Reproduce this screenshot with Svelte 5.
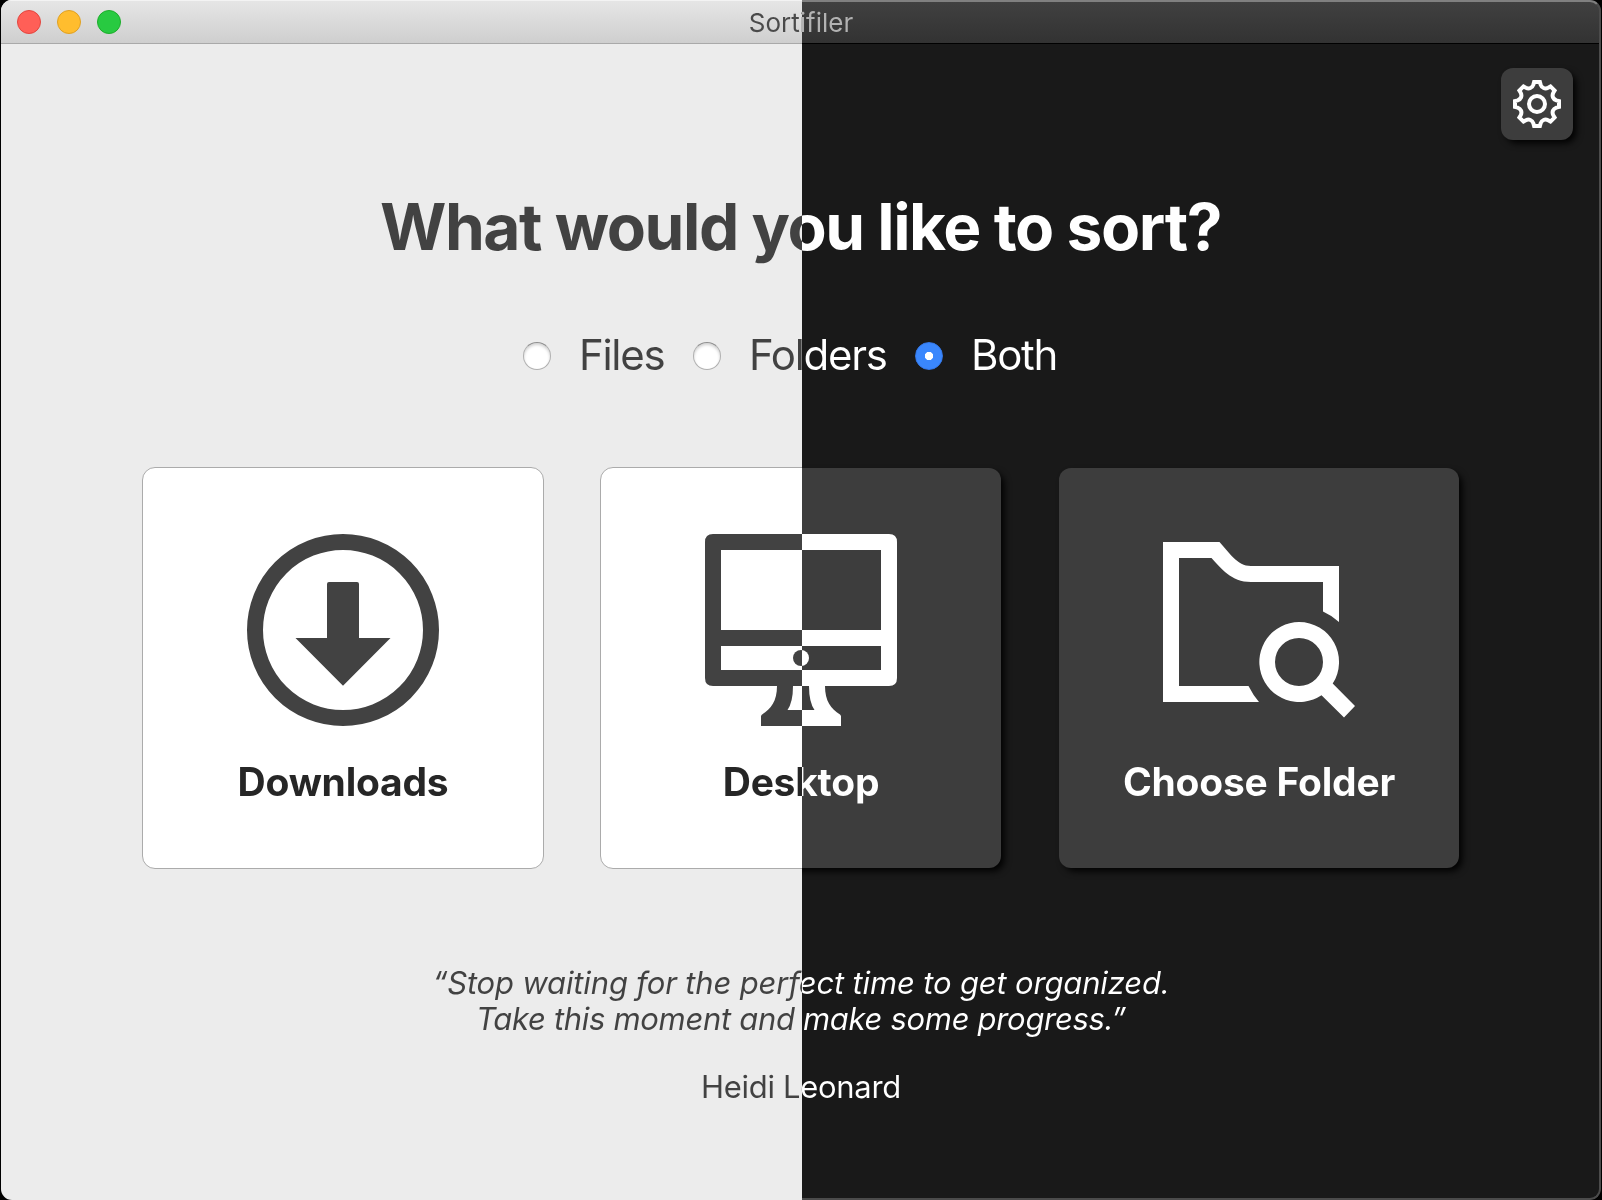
<script>
  let selected = $state('Both');

  const options = ['Files', 'Folders', 'Both'];
  const lights = ['red', 'yellow', 'green'];

  // Outline of an eight-toothed gear centred on the origin.
  function gearPath() {
    const rot = (x, y, deg) => {
      const a = (deg * Math.PI) / 180;
      const px = x * Math.cos(a) - y * Math.sin(a);
      const py = x * Math.sin(a) + y * Math.cos(a);
      return `${px.toFixed(2)} ${py.toFixed(2)}`;
    };
    let d = `M${rot(-2.9, -22, 0)}`;
    for (let k = 0; k < 8; k++) {
      const a = k * 45;
      d += `L${rot(2.9, -22, a)}L${rot(3.6, -19.4, a)}`;
      d += `C${rot(4.8, -16, a)} ${rot(-4.8, -16, a + 45)} ${rot(-3.6, -19.4, a + 45)}`;
      d += `L${rot(-2.9, -22, a + 45)}`;
    }
    return d + 'Z';
  }
</script>

<div class="window">
  <header class="titlebar">
    <div class="lights">
      {#each lights as light}
        <span class="light {light}"></span>
      {/each}
    </div>
    <span class="app-name">Sortifiler</span>
  </header>

  <main>
    <button class="settings" aria-label="Settings">
      <svg viewBox="-24 -24 48 48" width="48" height="48" fill="none" stroke="#fff" stroke-width="4">
        <path d={gearPath()} />
        <circle r="8" />
      </svg>
    </button>

    <h1>What would you like to sort?</h1>

    <div class="options">
      {#each options as option}
        <label class="option">
          <input type="radio" name="kind" value={option} bind:group={selected} />
          <span class="option-text">{option}</span>
        </label>
      {/each}
    </div>

    <div class="cards">
      <button class="card light-card">
        <svg viewBox="0 0 192 192" width="192" height="192" fill="#424242">
          <circle cx="96" cy="96" r="88" fill="none" stroke="#424242" stroke-width="16" />
          <path d="M82 48H110Q112 48 112 50V104H143.500L96 151.700L48.500 104H80V50Q80 48 82 48Z" />
        </svg>
        <span class="card-label">Downloads</span>
      </button>

      <button class="card split-card">
        <svg viewBox="0 0 192 192" width="192" height="192">
          <defs>
            <linearGradient id="split" gradientUnits="userSpaceOnUse" x1="0" y1="0" x2="194" y2="0">
              <stop offset="0.5" stop-color="#424242" />
              <stop offset="0.5" stop-color="#fff" />
            </linearGradient>
          </defs>
          <path
            fill="url(#split)"
            fill-rule="evenodd"
            d="M8 0H184Q192 0 192 8V144Q192 152 184 152H120C120 167 126 175 135 180.500Q136 181.500 136 182.500V192H56V182.500Q56 181.500 57 180.500C66 175 72 167 72 152H8Q0 152 0 144V8Q0 0 8 0ZM16 16V96H176V16ZM16 112V136H176V112ZM88 152Q88 168 82.500 176H109.500Q104 168 104 152Z"
          />
          <circle cx="96" cy="124" r="8" fill="url(#split)" />
        </svg>
        <span class="card-label">Desktop</span>
      </button>

      <button class="card dark-card">
        <svg viewBox="0 0 192 192" width="192" height="192" fill="#fff">
          <path d="M0 8H56.500C66 18 74 32 88 32H176V88Q168 81 160 77.500V48H88C68 48 58 34 48.500 24H16V152H85.500Q90 161 96 168H0Z" />
          <path fill-rule="evenodd" d="M136 88A40 40 0 0 1 169.700 149.600L192 172L181 183.500L158.500 161.300A40 40 0 1 1 136 88ZM136 104A24 24 0 1 0 136 152A24 24 0 1 0 136 104Z" />
        </svg>
        <span class="card-label">Choose Folder</span>
      </button>
    </div>

    <blockquote>
      <span class="line first">“Stop waiting for the perfect time to get organized.</span>
      <span class="line second">Take this moment and make some progress.”</span>
    </blockquote>
    <p class="author">Heidi Leonard</p>
  </main>
</div>

<style>
  :global(body) {
    margin: 0;
    background: #000;
  }

  .window,
  .window * {
    box-sizing: border-box;
  }

  .window {
    --split: 802px;
    --drop: 4px 4px 7px -1px #000;
    position: relative;
    width: 1600px;
    height: 1200px;
    margin-left: 1px;
    border-radius: 11px;
    overflow: hidden;
    font-family: Inter, 'Liberation Sans', sans-serif;
    background: linear-gradient(to right, #ececec var(--split), #191919 var(--split)) fixed;
  }

  /* Thin highlight round the dark half of the window. */
  .window::after {
    content: '';
    position: absolute;
    inset: 0;
    border: 2px solid #4b4b4b;
    border-top-color: #808080;
    border-radius: 11px;
    clip-path: inset(0 0 0 801px);
    pointer-events: none;
  }

  .titlebar {
    position: relative;
    display: flex;
    align-items: center;
    height: 44px;
    padding: 0 16px;
    background:
      linear-gradient(#a9a9a9, #a9a9a9) 0 43px / 801px 1px no-repeat,
      linear-gradient(#000, #000) 801px 43px / 799px 1px no-repeat,
      linear-gradient(#f3f3f3, #f3f3f3) 0 0 / 801px 1px no-repeat,
      linear-gradient(#e6e6e6, #cecece) 0 0 / 801px 44px no-repeat,
      linear-gradient(#414141, #323232) 801px 0 / 799px 44px no-repeat;
  }

  .lights {
    display: flex;
    gap: 16px;
    width: 0;
  }

  .light {
    flex: none;
    width: 24px;
    height: 24px;
    border-radius: 50%;
    border: 1px solid;
  }

  .red {
    background: #ff5f57;
    border-color: #e2463f;
  }

  .yellow {
    background: #ffbd2e;
    border-color: #dfa023;
  }

  .green {
    background: #28ca41;
    border-color: #1dad2b;
  }

  .app-name,
  h1,
  .option-text,
  .card-label,
  .line,
  .author {
    color: transparent;
    background: linear-gradient(to right, #424242 var(--split), #fff var(--split)) fixed;
    background-clip: text;
    -webkit-background-clip: text;
    white-space: nowrap;
  }

  .app-name {
    flex: 1;
    text-align: center;
    font-size: 26px;
    background-image: linear-gradient(to right, #4a4a4a var(--split), #b2b2b2 var(--split));
  }

  main {
    position: relative;
    display: flex;
    flex-direction: column;
    align-items: center;
  }

  button {
    padding: 0;
    font: inherit;
  }

  .settings {
    position: absolute;
    top: 24px;
    right: 28px;
    display: grid;
    place-items: center;
    width: 72px;
    height: 72px;
    border: 0;
    border-radius: 12px;
    background: #3d3d3d;
    box-shadow: var(--drop);
  }

  h1 {
    width: 100%;
    margin: 143px 0 0;
    padding-right: 1px;
    text-align: center;
    font-size: 64px;
    font-weight: 700;
    letter-spacing: -1.45px;
    line-height: 80px;
  }

  .options {
    display: grid;
    grid-template-columns: 170px 222px 164px;
    width: 556px;
    height: 50px;
    margin-top: 64px;
  }

  .option {
    display: flex;
    align-items: center;
    gap: 28px;
  }

  input {
    flex: none;
    appearance: none;
    width: 28px;
    height: 28px;
    margin: 0;
    border-radius: 50%;
    border: 1px solid #b0b0b0;
    border-top-color: #8e8e8e;
    background: #fff;
    box-shadow: inset 0 2px 3px rgba(0, 0, 0, 0.18);
  }

  input:checked {
    border-color: #3478e8;
    background: radial-gradient(circle, #fff 3.800px, #3a87fd 4.500px);
    box-shadow: none;
  }

  .option-text {
    margin-top: -3px;
    font-size: 42px;
    letter-spacing: -1.3px;
    line-height: 50px;
  }

  .cards {
    display: flex;
    gap: 56px;
    margin-top: 86px;
  }

  .card {
    position: relative;
    display: flex;
    flex-direction: column;
    align-items: center;
    width: 402px;
    height: 402px;
    padding-top: 66px;
    border: 1px solid #ababab;
    border-radius: 13px;
    background: #fff;
  }

  .card svg {
    display: block;
    flex: none;
    position: relative;
  }

  .card-label {
    position: relative;
    width: 100%;
    margin-top: 32px;
    text-align: center;
    font-size: 39px;
    font-weight: 700;
    letter-spacing: -0.24px;
    line-height: 48px;
    background-image: linear-gradient(to right, #262626 var(--split), #fff var(--split));
  }

  /* The dark finish has no border, so its face sits one pixel inside the card. */
  .split-card,
  .dark-card {
    border-color: transparent;
    background: none;
  }

  .split-card::before,
  .split-card::after,
  .dark-card::after {
    content: '';
    position: absolute;
  }

  .split-card::before {
    inset: -1px;
    border: 1px solid #ababab;
    border-radius: 13px;
    background: #fff;
    clip-path: inset(0 200px 0 0);
  }

  .split-card::after,
  .dark-card::after {
    inset: 0;
    z-index: 0;
    border-radius: 12px;
    background: #3d3d3d;
    box-shadow: var(--drop);
  }

  /* The middle card shows both finishes, cut along the window's split. */
  .split-card::after {
    clip-path: inset(-20px -20px -20px 201px);
  }

  .card svg,
  .card .card-label {
    z-index: 1;
  }

  blockquote {
    display: flex;
    flex-direction: column;
    width: 100%;
    margin: 96px 0 0;
    font-size: 31px;
    font-style: italic;
    line-height: 36px;
    text-align: center;
  }

  .first {
    letter-spacing: -0.16px;
  }

  .second {
    letter-spacing: -0.32px;
  }

  .author {
    width: 100%;
    margin: 32px 0 0;
    text-align: center;
    font-size: 31px;
    letter-spacing: -0.3px;
    line-height: 36px;
  }
</style>
